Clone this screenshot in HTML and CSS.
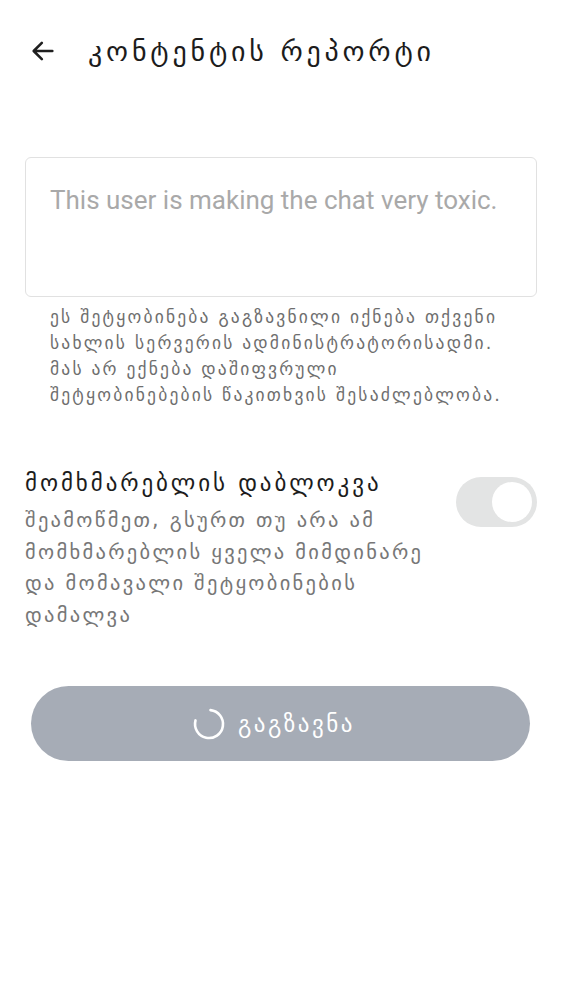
FILE: index.html
```html
<!DOCTYPE html>
<html lang="ka">
<head>
<meta charset="utf-8">
<link rel="stylesheet" href="styles.css">
</head>
<body>
<div class="screen">
  <header class="topbar">
    <button class="back" aria-label="back">
      <svg width="28" height="28" viewBox="0 0 24 24"><path d="M20 12H4.5M11 5l-7 7 7 7" fill="none" stroke="#1f1f1f" stroke-width="2.2" stroke-linecap="round" stroke-linejoin="round"/></svg>
    </button>
    <h1 class="title">კონტენტის რეპორტი</h1>
  </header>

  <div class="field">
    <div class="input">This user is making the chat very toxic.</div>
    <p class="helper">ეს შეტყობინება გაგზავნილი იქნება თქვენი<br>სახლის სერვერის ადმინისტრატორისადმი.<br>მას არ ექნება დაშიფვრული<br>შეტყობინებების წაკითხვის შესაძლებლობა.</p>
  </div>

  <div class="block-row">
    <div class="block-text">
      <div class="block-title">მომხმარებლის დაბლოკვა</div>
      <div class="block-desc">შეამოწმეთ, გსურთ თუ არა ამ<br>მომხმარებლის ყველა მიმდინარე<br>და მომავალი შეტყობინების<br>დამალვა</div>
    </div>
    <div class="toggle"><span class="knob"></span></div>
  </div>

  <button class="send">
    <svg class="spinner" width="34" height="34" viewBox="0 0 34 34"><path d="M18.5 3.1 A14 14 0 1 1 3.5 13.4" fill="none" stroke="#fff" stroke-width="2.6" stroke-linecap="round"/></svg>
    <span>გაგზავნა</span>
  </button>
</div>
</body>
</html>
```
FILE: styles.css
```css
html, body {
  margin: 0;
  padding: 0;
  background: #fff;
}
.screen {
  width: 562px;
  height: 1000px;
  font-family: "DejaVu Sans", "Noto Sans", sans-serif;
  color: #1f1f1f;
  box-sizing: border-box;
}
.topbar {
  display: flex;
  align-items: center;
  height: 102px;
  padding: 0 0 0 28px;
  gap: 30px;
}
.back {
  border: 0;
  background: none;
  padding: 0;
  width: 30px;
  height: 30px;
  display: flex;
  align-items: center;
  justify-content: center;
}
.title {
  margin: 0;
  font-size: 28px;
  font-weight: 400;
  color: #1c1c1c;
  letter-spacing: 3.8px;
}
.field {
  padding: 55px 25px 0 25px;
}
.input {
  height: 140px;
  border: 1px solid #e1e1e1;
  border-radius: 6px;
  box-sizing: border-box;
  padding: 26px 24px;
  font-family: Roboto, "Liberation Sans", sans-serif;
  font-size: 26px;
  line-height: 32px;
  color: #a9a9a9;
}
.helper {
  margin: 7px 0 0 0;
  padding: 0 0 0 25px;
  font-size: 17.5px;
  line-height: 26px;
  letter-spacing: 2.2px;
  color: #6e6e6e;
  white-space: nowrap;
}
.block-row {
  display: flex;
  align-items: flex-start;
  justify-content: space-between;
  padding: 60px 25px 0 25px;
}
.block-text {
  width: 420px;
}
.block-title {
  font-size: 23px;
  line-height: 30px;
  letter-spacing: 2.9px;
  color: #1c1c1c;
  white-space: nowrap;
}
.block-desc {
  margin-top: 7px;
  font-size: 20.5px;
  line-height: 31.5px;
  letter-spacing: 2.3px;
  color: #777;
  white-space: nowrap;
}
.toggle {
  margin-top: 9px;
  width: 81px;
  height: 50px;
  border-radius: 25px;
  background: #e3e4e4;
  display: flex;
  align-items: center;
  justify-content: flex-end;
  padding-right: 5px;
  box-sizing: border-box;
}
.knob {
  width: 40px;
  height: 40px;
  border-radius: 50%;
  background: #fff;
}
.send {
  margin: 55px 0 0 31px;
  width: 499px;
  height: 75px;
  border: 0;
  border-radius: 38px;
  background: #a6acb6;
  display: flex;
  align-items: center;
  justify-content: center;
  gap: 12px;
  font-family: "DejaVu Sans", "Noto Sans", sans-serif;
  font-size: 23px;
  letter-spacing: 2.5px;
  color: #fff;
  padding: 0 14px 0 0;
}
```
